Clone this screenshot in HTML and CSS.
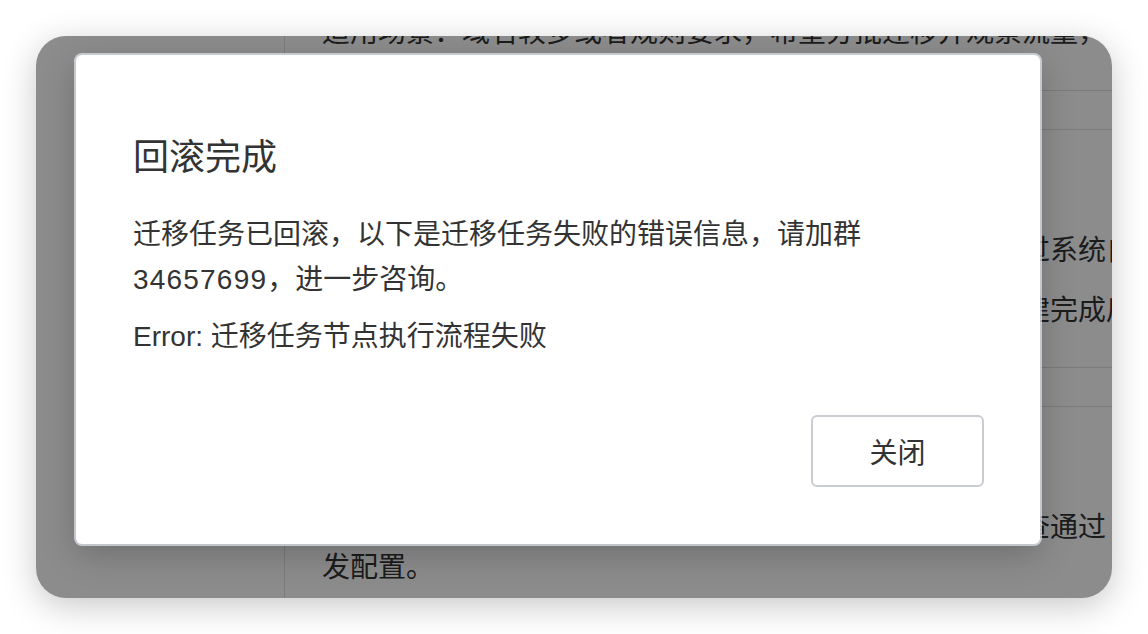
FILE: index.html
```html
<!DOCTYPE html>
<html lang="zh-CN">
<head>
<meta charset="utf-8">
<title>回滚完成</title>
<link rel="stylesheet" href="styles.css">
</head>
<body>
<div class="window">
  <div class="app">
    <aside class="sidebar"></aside>
    <main class="main">
      <section class="card card-first">
        <p class="line nowrap">适用场景：域名较多或者规则要求，希望分批迁移并观察流量，</p>
      </section>
      <section class="card card-mid">
        <p class="line nowrap">步骤说明：在控制台中选择需要迁移的域名和列表后，通过系统自动生成迁移配置</p>
        <p class="line nowrap gap">任务状态：迁移任务提交后系统将会进行检测，待任务创建完成后可查看结果</p>
      </section>
      <section class="card card-last">
        <p class="line">校验说明：系统会在迁移前对有域名的配置进行校验，检查通过发配置。</p>
      </section>
    </main>
  </div>
  <div class="mask"></div>
  <div class="modal" role="dialog">
    <h2 class="modal-title">回滚完成</h2>
    <p class="modal-text">迁移任务已回滚，以下是迁移任务失败的错误信息，请加群<span class="num">34657699</span>，进一步咨询。</p>
    <p class="modal-error">Error: 迁移任务节点执行流程失败</p>
    <div class="modal-footer">
      <button class="btn">关闭</button>
    </div>
  </div>
</div>
</body>
</html>
```

FILE: styles.css
```css
html, body {
  margin: 0;
  padding: 0;
  background: #ffffff;
}
body {
  width: 1148px;
  height: 634px;
  overflow: hidden;
  font-family: "Liberation Sans", "Noto Sans CJK SC", sans-serif;
  color: #333333;
}
.window {
  position: relative;
  margin: 36px 0 0 36px;
  width: 1076px;
  height: 562px;
  border-radius: 30px;
  overflow: hidden;
  background: #ffffff;
  box-shadow: 0 8px 34px rgba(0, 0, 0, 0.22);
}
.app {
  display: flex;
  height: 100%;
}
.sidebar {
  width: 248px;
  flex: none;
  border-right: 1px solid #e0e0e0;
}
.main {
  flex: 1;
  min-width: 0;
  font-family: "Noto Sans CJK SC", sans-serif;
  font-size: 28px;
  color: #333333;
}
.line {
  margin: 0;
  line-height: 40px;
  padding-left: 37px;
}
.nowrap {
  white-space: nowrap;
  overflow: hidden;
}
.gap {
  margin-top: 20px;
}
.card-first {
  margin-top: -26px;
  padding-bottom: 40px;
  border-bottom: 1px solid #e0e0e0;
}
.card-mid {
  margin-top: 38px;
  padding: 98px 0 39px;
  border-top: 1px solid #e0e0e0;
  border-bottom: 1px solid #e0e0e0;
}
.card-last {
  margin-top: 38px;
  padding-top: 98px;
  border-top: 1px solid #e0e0e0;
}
.mask {
  position: absolute;
  inset: 0;
  background: rgba(0, 0, 0, 0.45);
}
.modal {
  position: absolute;
  left: 40px;
  top: 19px;
  width: 964px;
  box-sizing: border-box;
  padding: 78px 56px 57px 57px;
  background: #ffffff;
  border-radius: 6px;
  box-shadow: 0 0 0 2px rgba(220, 226, 232, 0.75), 0 10px 34px rgba(0, 0, 0, 0.22);
}
.modal-title {
  margin: 0;
  font-size: 36px;
  line-height: 50px;
  font-weight: 400;
  color: #333333;
}
.modal-text {
  margin: 29px 0 0;
  font-size: 28px;
  line-height: 45px;
  color: #333333;
}
.num {
  letter-spacing: 1.2px;
}
.modal-error {
  margin: 12px 0 0;
  font-size: 28px;
  line-height: 45px;
  color: #333333;
}
.modal-footer {
  display: flex;
  justify-content: flex-end;
  margin-top: 56px;
}
.btn {
  width: 173px;
  height: 72px;
  box-sizing: border-box;
  border: 2px solid #c9ccd0;
  border-radius: 6px;
  background: #ffffff;
  font-family: "Liberation Sans", "Noto Sans CJK SC", sans-serif;
  font-size: 28px;
  color: #333333;
  padding: 0;
}
```
